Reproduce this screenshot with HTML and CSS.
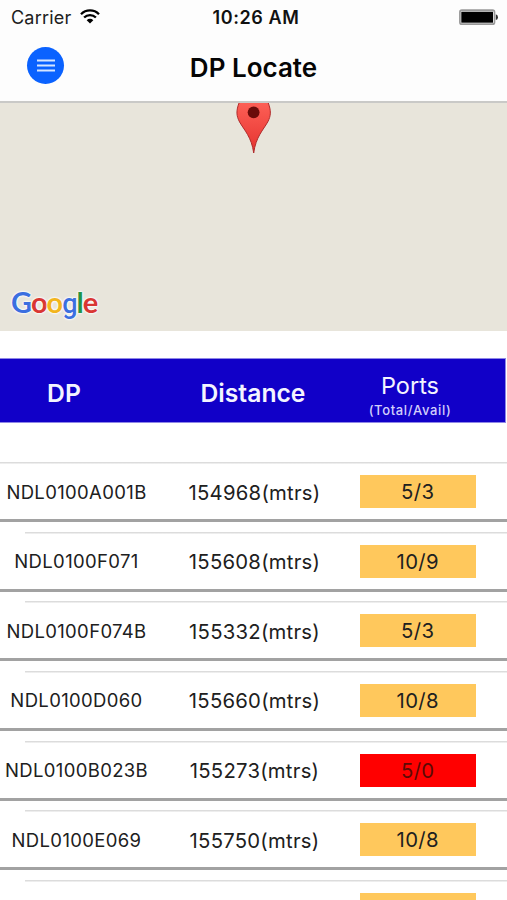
FILE: index.html
```html
<!DOCTYPE html>
<html lang="en">
<head>
  <meta charset="UTF-8">
  <meta name="viewport" content="width=device-width, initial-scale=1.0">
  <title>DP Locate</title>
  <link rel="stylesheet" href="styles.css">
</head>
<body>
  <header class="top">
    <div class="status">
      <div class="carrier">
        <span>Carrier</span>
        <svg class="wifi" width="20" height="15" viewBox="0 0 20 15">
          <path d="M1 5.2a12.7 12.7 0 0 1 18 0M4.1 8.5a8.3 8.3 0 0 1 11.8 0" fill="none" stroke="#000" stroke-width="2.3"/>
          <path d="M6.7 11.2a4.7 4.7 0 0 1 6.6 0L10 14.6z"/>
        </svg>
      </div>
      <div class="time">10:26 AM</div>
      <svg class="battery" width="40" height="17" viewBox="0 0 40 17">
        <rect x=".9" y="1.2" width="34.6" height="14" rx="2" fill="#fff" stroke="#999" stroke-width="1.7"/>
        <rect x="2.3" y="2.7" width="31.7" height="11"/>
        <path d="M36.8 5.3q2.2.5 2.2 2.9t-2.2 2.9z" fill="#333"/>
      </svg>
    </div>
    <div class="navbar">
      <button class="menu-btn" aria-label="Menu">
        <svg width="18" height="13" viewBox="0 0 18 13">
          <path d="M0 1.5h18M0 6.5h18M0 11.5h18" stroke="#d5e5ff" stroke-width="1.9"/>
        </svg>
      </button>
      <h1 class="title">DP Locate</h1>
    </div>
  </header>

  <main>
    <div class="map">
      <svg class="pin" width="36" height="52" viewBox="0 0 36 52">
        <defs>
          <linearGradient id="pinFill" x1="0" y1="0" x2="0" y2="1">
            <stop offset="0" stop-color="#fd6056"/>
            <stop offset="1" stop-color="#e5322f"/>
          </linearGradient>
        </defs>
        <path d="M3.4-1C-.2 8 .4 13 3.6 19c4.500 8 12 15 14.100 31C19.800 34 27.200 27 31.700 19c3.200-6 3.800-11 .2-20z" fill="url(#pinFill)" stroke="#b02a2a" stroke-width="1"/>
        <circle cx="17.600" cy="9.300" r="5.900" fill="#6b0b09"/>
      </svg>
      <div class="logo"><span class="blue">G</span><span class="red">o</span><span class="yellow">o</span><span class="blue small-g">g</span><span class="green">l</span><span class="red">e</span></div>
    </div>

    <div class="table-head">
      <div class="head-dp">DP</div>
      <div class="head-distance">Distance</div>
      <div class="head-ports">Ports<small>(Total/Avail)</small></div>
    </div>

    <div class="list">
      <div class="row">
        <div class="cells"><span class="dp">NDL0100A001B</span><span class="distance">154968(mtrs)</span><span class="ports">5/3</span></div>
      </div>
      <div class="row">
        <div class="cells"><span class="dp">NDL0100F071</span><span class="distance">155608(mtrs)</span><span class="ports">10/9</span></div>
      </div>
      <div class="row">
        <div class="cells"><span class="dp">NDL0100F074B</span><span class="distance">155332(mtrs)</span><span class="ports">5/3</span></div>
      </div>
      <div class="row">
        <div class="cells"><span class="dp">NDL0100D060</span><span class="distance">155660(mtrs)</span><span class="ports">10/8</span></div>
      </div>
      <div class="row">
        <div class="cells"><span class="dp">NDL0100B023B</span><span class="distance">155273(mtrs)</span><span class="ports full">5/0</span></div>
      </div>
      <div class="row">
        <div class="cells"><span class="dp">NDL0100E069</span><span class="distance">155750(mtrs)</span><span class="ports">10/8</span></div>
      </div>
      <div class="row last">
        <div class="cells"><span class="dp"></span><span class="distance"></span><span class="ports"></span></div>
      </div>
    </div>
  </main>
</body>
</html>
```
FILE: styles.css
```css
* {
  box-sizing: border-box;
}

body {
  font-family: Inter, "Liberation Sans", sans-serif;
  margin: 0;
  height: 900px;
  overflow: hidden;
  background-color: #fff;
  color: #202020;
}

.top {
  height: 103px;
  background-color: #fdfdfd;
  border-bottom: 2px solid #c9c9c7;
}

.status {
  display: grid;
  grid-template-columns: 1fr auto 1fr;
  align-items: center;
  height: 34px;
  padding: 0 8px 0 11px;
}

.carrier {
  display: flex;
  align-items: center;
  gap: 9px;
  font-size: 18px;
  letter-spacing: 0.2px;
}

.wifi {
  margin-top: -2px;
}

.time {
  padding-left: 2px;
  font-size: 18px;
  font-weight: 600;
  color: #111;
  letter-spacing: 0.6px;
}

.battery {
  justify-self: end;
}

.navbar {
  display: grid;
  grid-template-columns: 64px 1fr 64px;
  align-items: center;
  height: 67px;
}

.menu-btn {
  display: flex;
  align-items: center;
  justify-content: center;
  width: 37px;
  height: 37px;
  margin: 0 0 4px 27.4px;
  padding: 0;
  border: none;
  border-radius: 50%;
  background-color: #0a62ff;
}

.title {
  margin: 0;
  text-align: center;
  font-size: 26px;
  font-weight: 600;
  line-height: 32px;
  color: #050505;
}

.map {
  display: flex;
  flex-direction: column;
  justify-content: space-between;
  height: 228px;
  background-color: #e8e5db;
}

.pin {
  align-self: center;
}

.logo {
  height: 47px;
  font-family: Lato, sans-serif;
  font-size: 29px;
  font-weight: 700;
  line-height: 36px;
  letter-spacing: -1px;
  padding-left: 11px;
  text-shadow: 0 0 2px #fff, 0 0 2px #fff, 0 0 3px #fff;
}

.small-g {
  font-family: Roboto, sans-serif;
  font-size: 27px;
  font-weight: 500;
}

.blue { color: #3b6fe0; }
.red { color: #d93633; }
.yellow { color: #f2b51d; }
.green { color: #219346; }

.table-head {
  display: grid;
  grid-template-columns: 153px 200px 1fr;
  align-items: center;
  width: 506px;
  height: 65px;
  margin: 27px 0 39px;
  padding-top: 5px;
  background-color: #1100c8;
  border: 1px solid #8f87e6;
  border-left: none;
  color: #f4f4ff;
  text-align: center;
  font-size: 24.7px;
  font-weight: 600;
}

.head-dp {
  padding-right: 25px;
}

.head-ports {
  padding: 7px 38px 0 0;
  font-size: 23.5px;
  font-weight: 400;
  line-height: 28px;
}

.head-ports small {
  display: block;
  font-size: 13px;
  font-weight: 500;
  line-height: 21px;
  letter-spacing: 0.65px;
  color: #d3cffb;
}

.row {
  height: 69.65px;
  background: linear-gradient(#dcdcdc, #dcdcdc) 25px 0 / 100% 1.5px no-repeat;
}

.row:first-child {
  background-position: 0 0;
}

.row.last {
  height: 20px;
  overflow: hidden;
}

.cells {
  display: grid;
  grid-template-columns: 153px 203px 124px;
  align-items: center;
  height: 60px;
  border-bottom: 3px solid #a2a2a2;
  text-align: center;
}

.dp {
  padding-top: 2px;
  font-size: 18.5px;
  letter-spacing: 0.35px;
}

.distance {
  padding-top: 3px;
  font-size: 20.3px;
  letter-spacing: 0.25px;
}

.ports {
  width: 115.5px;
  height: 33px;
  margin: 2px 0 0 4px;
  background-color: #ffc85c;
  font-size: 20.3px;
  line-height: 34px;
  letter-spacing: 0.4px;
}

.ports.full {
  background-color: #f00;
  color: #5c0a05;
}
```
